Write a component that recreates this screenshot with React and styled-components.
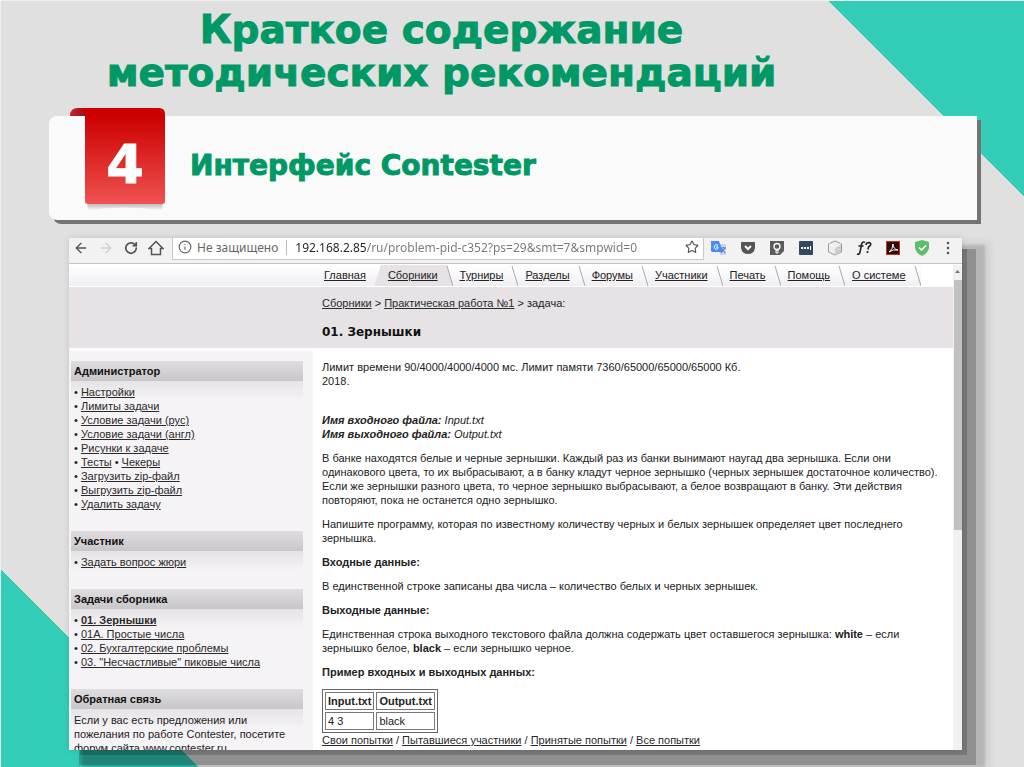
import styled, { createGlobalStyle } from "styled-components";
import { ArrowLeft, ArrowRight, Info, RotateCw, Star } from "lucide-react";

const GlobalStyle = createGlobalStyle`
  * {
    box-sizing: border-box;
  }

  body {
    margin: 0;
    font-family: "Liberation Sans", Arial, sans-serif;
    color: #222;
  }
`;

const Slide = styled.div`
  height: 100vh;
  display: flex;
  flex-direction: column;
  overflow: hidden;
  padding: 7px 47px 17px 48px;
  border-top: 1px solid #efefef;
  border-left: 1px solid #efefef;
  background:
    linear-gradient(to top right, transparent 50%, #33cdb8 50%) top right / 196px 195px no-repeat,
    linear-gradient(to bottom left, transparent 50%, #33cdb8 50%) bottom left / 198px 197px no-repeat,
    #e0e0e0;
`;

const Title = styled.h1`
  margin: 0 143px 22px 0;
  font-family: "DejaVu Sans", Verdana, sans-serif;
  font-size: 39px;
  font-weight: 900;
  line-height: 43px;
  text-align: center;
  white-space: nowrap;
  color: #009966;
  -webkit-text-stroke: 1px #009966;
`;

const Banner = styled.section`
  flex: none;
  display: flex;
  align-items: center;
  height: 104px;
  margin-bottom: 18px;
  padding-left: 36px;
  border-radius: 8px 0 0 8px;
  background-color: #fafafa;
  box-shadow: 4px 4px 0 #737373;
`;

const Ribbon = styled.div`
  position: relative;
  align-self: flex-start;
  width: 80px;
  height: 96px;
  margin-top: -8px;
  margin-right: 25px;
  color: #fff;
  font-family: "DejaVu Sans", Verdana, sans-serif;
  font-size: 54px;
  font-weight: 900;
  line-height: 114px;
  text-align: center;
  -webkit-text-stroke: 1px #fff;

  svg {
    position: absolute;
    left: -15px;
    top: 0;
  }

  span {
    position: relative;
  }
`;

const BannerTitle = styled.h2`
  margin: 0;
  padding-bottom: 5px;
  font-family: "DejaVu Sans", Verdana, sans-serif;
  font-size: 28px;
  font-weight: 900;
  color: #009966;
  -webkit-text-stroke: 1px #009966;
`;

const Browser = styled.main`
  flex: 1;
  min-height: 0;
  display: flex;
  flex-direction: column;
  margin: 0 15px 0 20px;
  background-color: #fff;
  box-shadow:
    0 0 6px rgba(0, 0, 0, 0.12),
    8px 8px 0 -3px rgba(0, 0, 0, 0.17),
    12px 13px 0 2px rgba(0, 0, 0, 0.2),
    18px 12px 2px 5px rgba(0, 0, 0, 0.12),
    20px 12px 8px 8px rgba(0, 0, 0, 0.08);
`;

const Toolbar = styled.div`
  flex: none;
  display: flex;
  align-items: flex-start;
  height: 26px;
  padding: 0 3px 0 4px;
  border-bottom: 1px solid #c4c4c4;
  background-color: #f2f2f2;
`;

const NavButtons = styled.div`
  display: flex;
  gap: 9px;
  margin-right: 8px;
`;

const IconButton = styled.button`
  display: flex;
  align-items: center;
  justify-content: center;
  width: 16px;
  height: 19px;
  padding: 0;
  border: none;
  background: none;
  color: ${({ $muted }) => ($muted ? "#cfcfcf" : "#555")};
  cursor: pointer;
`;

const Address = styled.form`
  flex: 1;
  display: flex;
  align-items: center;
  height: 22px;
  padding: 0 3px 3px 5px;
  border: 1px solid #c8c8c8;
  border-top: none;
  background-color: #fff;
  font-family: "Noto Sans", "Open Sans", sans-serif;
  font-size: 12px;
  color: #666;
`;

const Security = styled.span`
  margin: 0 8px 0 5px;
  padding-right: 8px;
  border-right: 1px solid #bbb;
  line-height: 15px;
`;

const UrlInput = styled.input`
  flex: 1;
  min-width: 0;
  height: 18px;
  padding: 0;
  border: none;
  outline: none;
  background: linear-gradient(90deg, #222 71px, #777 71px);
  background-clip: text;
  color: transparent;
  font: inherit;
`;

const Extensions = styled.div`
  display: flex;
  gap: 13px;
  margin-left: 7px;
`;

const Page = styled.div`
  flex: 1;
  min-height: 0;
  display: flex;
  padding-top: 1px;
`;

const Document = styled.div`
  flex: 1;
  display: flex;
  flex-direction: column;
  overflow: hidden;
`;

const ScrollTrack = styled.div`
  display: flex;
  flex-direction: column;
  align-items: center;
  width: 9px;
  padding-top: 5px;
  background-color: #f1f1f1;
`;

const ScrollThumb = styled.div`
  width: 8px;
  height: 52%;
  margin-top: 7px;
  background-color: #c1c1c1;
`;

const Tabs = styled.nav`
  flex: none;
  display: flex;
  height: 22px;
  padding-left: 248px;
  border-bottom: 1px solid #fff;
  background: linear-gradient(#fff, #f0eef2);
`;

const Tab = styled.a`
  flex: none;
  display: block;
  padding: 0 8px 0 7px;
  background-color: ${({ $active }) => ($active ? "#e6e2e6" : "transparent")};
  color: #222;
  font-size: 11px;
  line-height: 21px;
`;

const TabsEnd = styled.div`
  flex: 1;
  background-color: #fff;
`;

const Header = styled.header`
  flex: none;
  height: 61px;
  padding: 9px 0 0 253px;
  background-color: #e6e2e6;
  font-size: 11px;
  line-height: 14px;
`;

const ProblemTitle = styled.h3`
  margin: 14px 0 0;
  font-family: "DejaVu Sans", Verdana, sans-serif;
  font-size: 12px;
  line-height: 16px;
  color: #111;
`;

const Columns = styled.div`
  flex: 1;
  min-height: 0;
  display: flex;
  padding-top: 3px;
`;

const Sidebar = styled.aside`
  flex: none;
  width: 244px;
  padding: 10px 10px 0 2px;
  background-color: #f6f3f6;
`;

const Block = styled.section`
  margin-bottom: 19px;
`;

const BlockTitle = styled.h4`
  margin: 0;
  padding-left: 3px;
  background: linear-gradient(#e0dde0, #c9c6c9);
  font-size: 11px;
  line-height: 20px;
  color: #111;
`;

const BlockBody = styled.div`
  padding: 4px 16px 1px 3px;
  background: linear-gradient(#e6e3e6, #f6f3f6 20px);
  font-size: 11px;
  line-height: 14px;
`;

const Link = styled.a`
  color: #2a2a2a;
  font-weight: ${({ $bold }) => ($bold ? "bold" : "normal")};
`;

const List = styled.ul`
  margin: 0;
  padding: 0;
  list-style: none;
`;

const Content = styled.article`
  flex: 1;
  padding: 9px 12px 0 9px;
  font-size: 11px;
  line-height: 14px;

  p,
  h4 {
    margin: 0 0 10px;
    font-size: 11px;
  }
`;

const Limits = styled.div`
  margin-bottom: 25px;
`;

const Samples = styled.table`
  border: 1px solid #666;
  border-spacing: 2px;
  font-size: 11px;
  line-height: 14px;

  th,
  td {
    padding: 1px 2px;
    border: 1px solid #777;
    text-align: left;
  }
`;

const RibbonArt = () => (
  <svg width="95" height="104" viewBox="0 0 95 104" aria-hidden="true">
    <defs>
      <linearGradient id="ribbon" x1="0" y1="0" x2="0" y2="1">
        <stop offset="0.08" stopColor="#cc0000" />
        <stop offset="1" stopColor="#ef5350" />
      </linearGradient>
      <linearGradient id="fold" x1="0" y1="0" x2="1" y2="0">
        <stop offset="0" stopColor="#d02030" />
        <stop offset="1" stopColor="#701818" />
      </linearGradient>
      <linearGradient id="under" x1="0" y1="0" x2="0" y2="1">
        <stop offset="0" stopColor="#aaa" />
        <stop offset="1" stopColor="#f4f4f4" />
      </linearGradient>
    </defs>
    <path d="M17 94h76l-1 8q-37-5-74 0z" fill="url(#under)" />
    <path d="M0 8q0-8 8-8h12v8z" fill="url(#fold)" />
    <path d="M6 0h83q6 0 6 6v87q0 3-3 3H18q-3 0-3-3V8q0-7-9-8z" fill="url(#ribbon)" />
  </svg>
);

const slants = {
  plain: <path d="M1 1l6 20" stroke="#aaa" fill="none" />,
  open: <path d="M7 0L0 21h7z" fill="#e6e2e6" />,
  close: (
    <>
      <path d="M0 0h1l6 21H0z" fill="#e6e2e6" />
      <path d="M1 1l6 20" stroke="#aaa" fill="none" />
    </>
  ),
};

const SlantSvg = styled.svg`
  flex: none;
`;

const Slant = ({ kind = "plain" }) => (
  <SlantSvg width="7" height="21" aria-hidden="true">
    {slants[kind]}
  </SlantSvg>
);

const extensions = [
  {
    name: "Translate",
    art: (
      <>
        <path d="M6 4h8l1 1v10H9z" fill="#c6d3e8" />
        <path d="M0 1h8l4 11H1l-1-1z" fill="#4a8af4" />
        <path d="M7 5.500A2.200 2.200 0 1 0 7 8.500V7H5" stroke="#fff" fill="none" />
        <path d="M10 8h5M12.500 7v1M14 8l-4 5M11 9l3 4" stroke="#5478bd" fill="none" />
      </>
    ),
  },
  {
    name: "Pocket",
    art: (
      <>
        <path d="M1 3q0-1 1-1h12q1 0 1 1v5q-1 6-7 6T1 8z" fill="#555" />
        <path d="M5 6l3 3 3-3" stroke="#fff" strokeWidth="2" fill="none" />
      </>
    ),
  },
  {
    name: "Keep",
    art: (
      <>
        <path d="M1 1h14v10l-4 4H1z" fill="#5c5c5c" />
        <circle cx="8" cy="6.500" r="3" stroke="#fff" strokeWidth="1.300" fill="none" />
        <path d="M7 10h2v3H7z" stroke="#fff" fill="none" />
      </>
    ),
  },
  {
    name: "Passwords",
    art: (
      <>
        <rect x="1" y="1" width="14" height="14" rx="1" fill="#34495e" />
        <path d="M3 8h2M6 8h2M9 8h2" stroke="#fff" strokeWidth="2" />
        <path d="M12.500 6v4" stroke="#fff" />
      </>
    ),
  },
  {
    name: "Cube",
    art: (
      <>
        <path d="M8 1l6.500 3v8L8 15l-6.500-3V4z" fill="#eee" stroke="#999" />
        <path d="M8 7l6-3v8l-6 3z" fill="#cfcfcf" />
        <path d="M2 4l6 3 6-3" stroke="#fff" fill="none" />
      </>
    ),
  },
  {
    name: "Fonts",
    art: (
      <>
        <path d="M9 2.500q-2.500-1.500-3.300 1.500L4 12q-.7 3-3 2M2.500 6h5" stroke="#222" strokeWidth="1.600" fill="none" />
        <path d="M10 5q.3-2.500 2.700-2.500 2.300.2 2 2.200-.2 1.300-2.200 2.300l-.5 2.500" stroke="#222" strokeWidth="1.600" fill="none" />
        <circle cx="11.500" cy="12" r="1.100" fill="#222" />
      </>
    ),
  },
  {
    name: "Acrobat",
    art: (
      <>
        <rect x="1.500" y="1.500" width="13" height="13" fill="#2b0e0c" stroke="#cf2a1b" />
        <path d="M4 12q4-3 4-8 0 5 5 6-5-1-9 2z" stroke="#fff" fill="none" />
      </>
    ),
  },
  {
    name: "Protection",
    art: (
      <>
        <path d="M8 0l7 2v6q-1 5-7 8-6-3-7-8V2z" fill="#5fbe6b" />
        <path d="M5 7.500l2.500 2.500L12 5.500" stroke="#fff" strokeWidth="1.500" fill="none" />
      </>
    ),
  },
  {
    name: "Menu",
    art: (
      <g fill="#555">
        <circle cx="5" cy="3" r="1.300" />
        <circle cx="5" cy="8" r="1.300" />
        <circle cx="5" cy="13" r="1.300" />
      </g>
    ),
  },
];

const tabs = ["Турниры", "Разделы", "Форумы", "Участники", "Печать", "Помощь", "О системе"];

const adminLinks = [
  ["Настройки"],
  ["Лимиты задачи"],
  ["Условие задачи (рус)"],
  ["Условие задачи (англ)"],
  ["Рисунки к задаче"],
  ["Тесты", "Чекеры"],
  ["Загрузить zip-файл"],
  ["Выгрузить zip-файл"],
  ["Удалить задачу"],
];

const problems = ["01. Зернышки", "01A. Простые числа", "02. Бухгалтерские проблемы", '03. "Несчастливые" пиковые числа'];

const App = () => {
  return (
    <Slide>
      <GlobalStyle />
      <Title>
        Краткое содержание
        <br />
        методических рекомендаций
      </Title>
      <Banner>
        <Ribbon>
          <RibbonArt />
          <span>4</span>
        </Ribbon>
        <BannerTitle>Интерфейс Contester</BannerTitle>
      </Banner>
      <Browser>
        <Toolbar>
          <NavButtons>
            <IconButton aria-label="Назад"><ArrowLeft size={16} /></IconButton>
            <IconButton aria-label="Вперёд" $muted><ArrowRight size={16} /></IconButton>
            <IconButton aria-label="Обновить"><RotateCw size={14} strokeWidth={3} /></IconButton>
            <IconButton aria-label="Домой">
              <svg width="16" height="16" viewBox="0 0 16 16" fill="none" stroke="#555" strokeWidth="1.500">
                <path d="M1 8.500L8 1.500l7 7h-2.500v6h-9v-6z" />
              </svg>
            </IconButton>
          </NavButtons>
          <Address onSubmit={(e) => e.preventDefault()}>
            <Info size={14} />
            <Security>Не защищено</Security>
            <UrlInput aria-label="Адрес" defaultValue="192.168.2.85/ru/problem-pid-c352?ps=29&smt=7&smpwid=0" />
            <IconButton type="button" aria-label="В закладки"><Star size={14} /></IconButton>
          </Address>
          <Extensions>
            {extensions.map(({ name, art }) => (
              <IconButton key={name} aria-label={name}>
                <svg width="16" height="16" viewBox="0 0 16 16">{art}</svg>
              </IconButton>
            ))}
          </Extensions>
        </Toolbar>
        <Page>
          <Document>
            <Tabs>
              <Tab href="#">Главная</Tab>
              <Slant kind="open" />
              <Tab href="#" $active>Сборники</Tab>
              <Slant kind="close" />
              {tabs.map((tab) => [
                <Tab key={tab} href="#">{tab}</Tab>,
                <Slant key={`${tab}-slant`} />,
              ])}
              <TabsEnd />
            </Tabs>
            <Header>
              <Link href="#">Сборники</Link> &gt; <Link href="#">Практическая работа №1</Link> &gt; задача:
              <ProblemTitle>01. Зернышки</ProblemTitle>
            </Header>
            <Columns>
              <Sidebar>
                <Block>
                  <BlockTitle>Администратор</BlockTitle>
                  <BlockBody>
                    <List>
                      {adminLinks.map((row) => (
                        <li key={row[0]}>
                          {row.map((text) => (
                            <span key={text}>• <Link href="#">{text}</Link> </span>
                          ))}
                        </li>
                      ))}
                    </List>
                  </BlockBody>
                </Block>
                <Block>
                  <BlockTitle>Участник</BlockTitle>
                  <BlockBody>
                    • <Link href="#">Задать вопрос жюри</Link>
                  </BlockBody>
                </Block>
                <Block>
                  <BlockTitle>Задачи сборника</BlockTitle>
                  <BlockBody>
                    <List>
                      {problems.map((text, i) => (
                        <li key={text}>• <Link href="#" $bold={i === 0}>{text}</Link></li>
                      ))}
                    </List>
                  </BlockBody>
                </Block>
                <Block>
                  <BlockTitle>Обратная связь</BlockTitle>
                  <BlockBody>
                    Если у вас есть предложения или пожелания по работе Contester, посетите форум сайта www.contester.ru
                  </BlockBody>
                </Block>
              </Sidebar>
              <Content>
                <Limits>
                  Лимит времени 90/4000/4000/4000 мс. Лимит памяти 7360/65000/65000/65000 Кб.
                  <br />
                  2018.
                </Limits>
                <p>
                  <em><b>Имя входного файла:</b> Input.txt</em>
                  <br />
                  <em><b>Имя выходного файла:</b> Output.txt</em>
                </p>
                <p>
                  В банке находятся белые и черные зернышки. Каждый раз из банки вынимают наугад два зернышка. Если они
                  одинакового цвета, то их выбрасывают, а в банку кладут черное зернышко (черных зернышек достаточное
                  количество). Если же зернышки разного цвета, то черное зернышко выбрасывают, а белое возвращают в
                  банку. Эти действия повторяют, пока не останется одно зернышко.
                </p>
                <p>
                  Напишите программу, которая по известному количеству черных и белых зернышек определяет цвет
                  последнего зернышка.
                </p>
                <h4>Входные данные:</h4>
                <p>В единственной строке записаны два числа – количество белых и черных зернышек.</p>
                <h4>Выходные данные:</h4>
                <p>
                  Единственная строка выходного текстового файла должна содержать цвет оставшегося зернышка:{" "}
                  <b>white</b> – если зернышко белое, <b>black</b> – если зернышко черное.
                </p>
                <h4>Пример входных и выходных данных:</h4>
                <Samples>
                  <thead>
                    <tr>
                      <th>Input.txt</th>
                      <th>Output.txt</th>
                    </tr>
                  </thead>
                  <tbody>
                    <tr>
                      <td>4 3</td>
                      <td>black</td>
                    </tr>
                  </tbody>
                </Samples>
                <Link href="#">Свои попытки</Link> / <Link href="#">Пытавшиеся участники</Link> /{" "}
                <Link href="#">Принятые попытки</Link> / <Link href="#">Все попытки</Link>
              </Content>
            </Columns>
          </Document>
          <ScrollTrack>
            <svg width="5" height="3" viewBox="0 0 5 3" aria-hidden="true">
              <path d="M0 3l2.500-3L5 3z" fill="#777" />
            </svg>
            <ScrollThumb />
          </ScrollTrack>
        </Page>
      </Browser>
    </Slide>
  );
};

export default App;
